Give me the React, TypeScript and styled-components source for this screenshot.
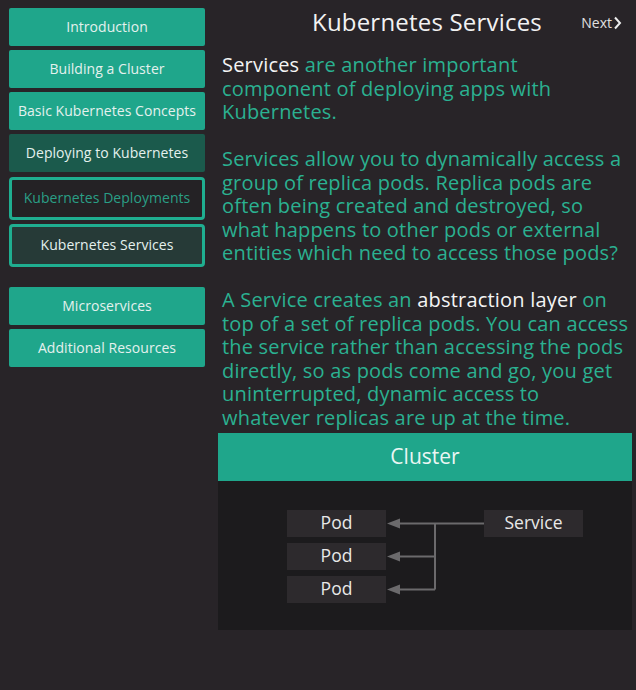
import React from "react";
import styled, { createGlobalStyle } from "styled-components";

const Global = createGlobalStyle`
  html, body { margin: 0; padding: 0; background: #282428; }
  body { font-family: "Open Sans", "Noto Sans", sans-serif; }
`;

const Page = styled.div`
  display: flex;
  width: 636px;
  height: 690px;
  background: #282428;
  box-sizing: border-box;
  padding: 8px 4px 0 9px;
  gap: 13px;
`;

const Sidebar = styled.nav`
  width: 196px;
  display: flex;
  flex-direction: column;
  gap: 4px;
`;

const NavButton = styled.div<{ $variant: "light" | "dark" | "outline" | "active"; $mt?: number }>`
  height: ${(p) => (p.$variant === "outline" || p.$variant === "active" ? "43px" : "38px")};
  box-sizing: border-box;
  display: flex;
  align-items: center;
  justify-content: center;
  padding-bottom: 2px;
  font-size: 14px;
  letter-spacing: 0.05px;
  white-space: nowrap;
  margin-top: ${(p) => p.$mt ?? 0}px;
  background: ${(p) =>
    p.$variant === "light" ? "#1fa68b" : p.$variant === "dark" ? "#1b5a4c" : p.$variant === "outline" ? "#242225" : "#263a37"};
  color: ${(p) => (p.$variant === "outline" ? "#2a9f85" : "#e4f1ee")};
  border: ${(p) => (p.$variant === "outline" || p.$variant === "active" ? "3px solid #1fae90" : "none")};
  border-radius: ${(p) => (p.$variant === "outline" || p.$variant === "active" ? "4px" : "2px")};
`;

const Main = styled.main`
  width: 414px;
  display: flex;
  flex-direction: column;
`;

const Header = styled.header`
  position: relative;
  height: 36px;
  display: flex;
  align-items: center;
  justify-content: center;
  margin-top: -5px;
`;

const Title = styled.h1`
  margin: 0;
  font-weight: 400;
  font-size: 24px;
  color: #f2f2f2;
  padding-left: 4px;
  letter-spacing: 0.2px;
`;

const Next = styled.span`
  position: absolute;
  right: 10px;
  top: 10px;
  font-size: 14px;
  color: #e0e0e0;
  display: flex;
  align-items: center;
  gap: 1px;
`;

const Body = styled.div`
  padding-left: 4px;
  margin-top: 14px;
`;

const Para = styled.p`
  margin: 0 0 23.5px 0;
  font-size: 20px;
  line-height: 23.5px;
  letter-spacing: 0.2px;
  white-space: nowrap;
  color: #2bb191;
  &:last-child { margin-bottom: 0; }
`;

const Hi = styled.span`
  color: #f4f4f4;
`;

const Cluster = styled.section`
  margin-top: 4px;
  height: 197px;
  background: #1c1b1d;
  display: flex;
  flex-direction: column;
`;

const ClusterHead = styled.div`
  height: 48px;
  background: #1fa68b;
  display: flex;
  align-items: center;
  justify-content: center;
  padding-bottom: 2px;
  box-sizing: border-box;
  color: #eaf6f3;
  font-size: 21px;
`;

const Diagram = styled.div`
  display: flex;
  align-items: flex-start;
  padding: 29px 0 0 69px;
`;

const PodCol = styled.div`
  display: flex;
  flex-direction: column;
  gap: 6px;
`;

const Box = styled.div`
  width: 99px;
  height: 27px;
  box-sizing: border-box;
  padding-bottom: 3px;
  background: #2d2a2d;
  color: #e8e8e8;
  font-size: 17.5px;
  display: flex;
  align-items: center;
  justify-content: center;
`;

export default function App() {
  return (
    <>
      <Global />
      <Page>
        <Sidebar>
          <NavButton $variant="light">Introduction</NavButton>
          <NavButton $variant="light">Building a Cluster</NavButton>
          <NavButton $variant="light">Basic Kubernetes Concepts</NavButton>
          <NavButton $variant="dark">Deploying to Kubernetes</NavButton>
          <NavButton $variant="outline" $mt={1}>Kubernetes Deployments</NavButton>
          <NavButton $variant="active">Kubernetes Services</NavButton>
          <NavButton $variant="light" $mt={16}>Microservices</NavButton>
          <NavButton $variant="light">Additional Resources</NavButton>
        </Sidebar>
        <Main>
          <Header>
            <Title>Kubernetes Services</Title>
            <Next>
              Next
              <svg width="9" height="14" viewBox="0 0 9 14">
                <path d="M2 1.5 L7 7 L2 12.5" fill="none" stroke="#ececec" strokeWidth="2" />
              </svg>
            </Next>
          </Header>
          <Body>
            <Para>
              <Hi>Services</Hi> are another important
              <br />
              component of deploying apps with
              <br />
              Kubernetes.
            </Para>
            <Para>
              Services allow you to dynamically access a
              <br />
              group of replica pods. Replica pods are
              <br />
              often being created and destroyed, so
              <br />
              what happens to other pods or external
              <br />
              entities which need to access those pods?
            </Para>
            <Para>
              A Service creates an <Hi>abstraction layer</Hi> on
              <br />
              top of a set of replica pods. You can access
              <br />
              the service rather than accessing the pods
              <br />
              directly, so as pods come and go, you get
              <br />
              uninterrupted, dynamic access to
              <br />
              whatever replicas are up at the time.
            </Para>
          </Body>
          <Cluster>
            <ClusterHead>Cluster</ClusterHead>
            <Diagram>
              <PodCol>
                <Box>Pod</Box>
                <Box>Pod</Box>
                <Box>Pod</Box>
              </PodCol>
              <svg width="98" height="93" viewBox="0 0 98 93">
                <g stroke="#6b6a6c" strokeWidth="2" fill="none">
                  <path d="M98 13.5 H12" />
                  <path d="M49 13.5 V79.5" />
                  <path d="M49 46.5 H12" />
                  <path d="M49 79.5 H12" />
                </g>
                <g fill="#6b6a6c">
                  <path d="M1 13.5 L14 8.5 V18.5 Z" />
                  <path d="M1 46.5 L14 41.5 V51.5 Z" />
                  <path d="M1 79.5 L14 74.5 V84.5 Z" />
                </g>
              </svg>
              <Box>Service</Box>
            </Diagram>
          </Cluster>
        </Main>
      </Page>
    </>
  );
}
